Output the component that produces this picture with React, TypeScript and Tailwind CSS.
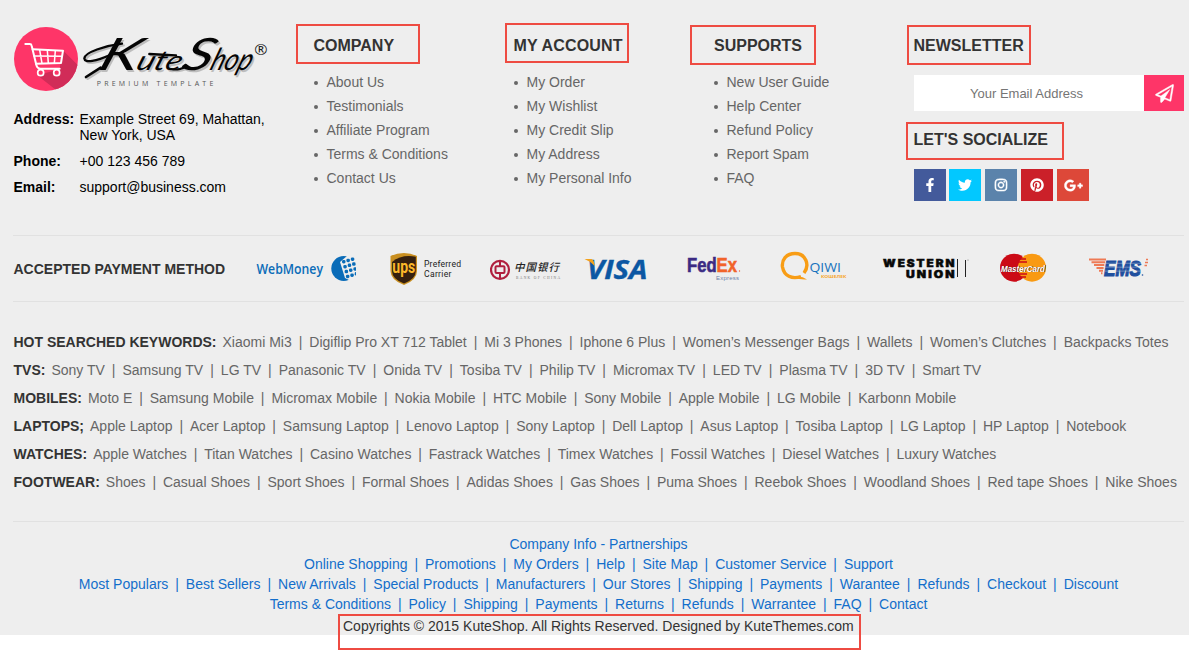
import type { ReactNode } from "react";
import {
  FaFacebookF,
  FaGooglePlusG,
  FaInstagram,
  FaPinterest,
  FaTwitter,
} from "react-icons/fa";

const company = ["About Us", "Testimonials", "Affiliate Program", "Terms & Conditions", "Contact Us"];
const account = ["My Order", "My Wishlist", "My Credit Slip", "My Address", "My Personal Info"];
const supports = ["New User Guide", "Help Center", "Refund Policy", "Report Spam", "FAQ"];

const keywords = [
  { label: "HOT SEARCHED KEYWORDS:", gap: "mx-[6.95px]", items: ["Xiaomi Mi3", "Digiflip Pro XT 712 Tablet", "Mi 3 Phones", "Iphone 6 Plus", "Women’s Messenger Bags", "Wallets", "Women’s Clutches", "Backpacks Totes"] },
  { label: "TVS:", gap: "mx-[7.02px]", items: ["Sony TV", "Samsung TV", "LG TV", "Panasonic TV", "Onida TV", "Tosiba TV", "Philip TV", "Micromax TV", "LED TV", "Plasma TV", "3D TV", "Smart TV"] },
  { label: "MOBILES:", items: ["Moto E", "Samsung Mobile", "Micromax Mobile", "Nokia Mobile", "HTC Mobile", "Sony Mobile", "Apple Mobile", "LG Mobile", "Karbonn Mobile"] },
  { label: "LAPTOPS;", items: ["Apple Laptop", "Acer Laptop", "Samsung Laptop", "Lenovo Laptop", "Sony Laptop", "Dell Laptop", "Asus Laptop", "Tosiba Laptop", "LG Laptop", "HP Laptop", "Notebook"] },
  { label: "WATCHES:", items: ["Apple Watches", "Titan Watches", "Casino Watches", "Fastrack Watches", "Timex Watches", "Fossil Watches", "Diesel Watches", "Luxury Watches"] },
  { label: "FOOTWEAR:", items: ["Shoes", "Casual Shoes", "Sport Shoes", "Formal Shoes", "Adidas Shoes", "Gas Shoes", "Puma Shoes", "Reebok Shoes", "Woodland Shoes", "Red tape Shoes", "Nike Shoes"] },
];

const bottomLinks = [
  ["Company Info - Partnerships"],
  ["Online Shopping", "Promotions", "My Orders", "Help", "Site Map", "Customer Service", "Support"],
  ["Most Populars", "Best Sellers", "New Arrivals", "Special Products", "Manufacturers", "Our Stores", "Shipping", "Payments", "Warantee", "Refunds", "Checkout", "Discount"],
  ["Terms & Conditions", "Policy", "Shipping", "Payments", "Returns", "Refunds", "Warrantee", "FAQ", "Contact"],
];

function Title({ className, children }: { className: string; children: ReactNode }) {
  return (
    <h3 className={`flex items-center border-2 border-[#ee4b42] text-base font-bold whitespace-nowrap text-[#333] ${className}`}>
      {children}
    </h3>
  );
}

function LinkList({ items, className }: { items: string[]; className: string }) {
  return (
    <ul className={className}>
      {items.map((t) => (
        <li key={t} className="flex h-6 items-center gap-[9px] whitespace-nowrap">
          <span className="mt-px size-1 rounded-full bg-[#666]" />
          <a>{t}</a>
        </li>
      ))}
    </ul>
  );
}

function Links({ items, gap = "mx-[6.89px]" }: { items: string[]; gap?: string }) {
  return (
    <>
      {items.map((t, i) => (
        <span key={t}>
          {i > 0 && <span className={gap}>|</span>}
          <a>{t}</a>
        </span>
      ))}
    </>
  );
}

function Logo() {
  return (
    <svg className="block h-[70px] w-[260px]" viewBox="36 30 780 210">
      <clipPath id="disc"><circle cx="138" cy="132" r="96" /></clipPath>
      <circle cx="138" cy="132" r="96" fill="#fe3568" />
      <path d="M190 107 L260 177 L200 250 L112 181 L178 163 Z" fill="#d12c58" clipPath="url(#disc)" />
      <g fill="none" stroke="#fff" strokeLinecap="round" strokeLinejoin="round">
        <path d="M76 87 H89 Q94 87 95 92 L109 150 Q112 161 122 161 H179" strokeWidth="6" />
        <path d="M98 103 L189 107 L183 144 L108 146" strokeWidth="6" />
        <path d="M102 123 L185 124 M119 105 L126 145 M142 106 L145 145 M166 107 L163 144" strokeWidth="4.5" />
        <circle cx="122" cy="173" r="9" strokeWidth="5" fill="#fe3568" />
        <circle cx="170" cy="173" r="9" strokeWidth="5" fill="#fe3568" />
      </g>
      {[{ c: "#bdbdbd", d: 5 }, { c: "#050505", d: 0 }].map(({ c, d }) => (
        <g key={c} transform={`translate(${d} ${d})`} aria-hidden={d > 0}>
          <g transform="translate(0 166) skewX(-20)" fill={c} fontFamily="Lato, sans-serif" fontStyle="italic">
            <text x="290" y="0" fontSize="134" textLength="116" lengthAdjust="spacingAndGlyphs">K</text>
            <text x="404" y="0" fontSize="82" textLength="134" lengthAdjust="spacingAndGlyphs">ute</text>
            <text x="540" y="0" fontSize="134" textLength="88" lengthAdjust="spacingAndGlyphs">S</text>
            <text x="626" y="0" fontSize="92" textLength="122" lengthAdjust="spacingAndGlyphs">hop</text>
          </g>
          <g fill="none" stroke={c} strokeLinecap="round">
            <path d="M366 86 C316 92 254 112 253 130 C254 146 290 138 330 120" strokeWidth="7" />
            <path d="M448 117 L528 121" strokeWidth="7" />
            <path d="M302 158 L258 186" strokeWidth="8" />
            <path d="M514 162 C532 168 548 160 562 154" strokeWidth="6" />
          </g>
        </g>
      ))}
      <text x="290" y="213" fontSize="21" fontFamily="Open Sans, sans-serif" fill="#555" textLength="350">PREMIUM TEMPLATE</text>
      <text x="763" y="120" fontSize="46" fontFamily="Open Sans, sans-serif" fill="#222" textLength="40" lengthAdjust="spacingAndGlyphs">®</text>
    </svg>
  );
}

function PaperPlane() {
  return (
    <svg className="size-[19px]" viewBox="-40 -40 1872 1872" fill="currentColor" stroke="currentColor" strokeWidth="50">
      <path d="M1764 11q33 24 27 64l-256 1536q-5 29-32 45-14 8-31 8-11 0-24-5l-527-215-298 327q-18 21-47 21-14 0-23-4-19-7-30-23.500t-11-36.500v-452l-472-193q-37-14-40-55-3-39 32-59l1664-960q35-21 68 2zM1422 1513l221-1323-1434 827 336 137 863-639-478 797z" />
    </svg>
  );
}

function WebMoney() {
  return (
    <svg className="ml-[31px] h-9 w-[100px] shrink-0" viewBox="256 251 100 36">
      <text x="256.5" y="273.5" fontSize="13.5" fontFamily="Open Sans, sans-serif" fontWeight="600" fill="#0a6cb8" textLength="66.5" lengthAdjust="spacingAndGlyphs">WebMoney</text>
      <circle cx="343.7" cy="268.5" r="12.4" fill="#0a6cb8" />
      <path d="M347 256 L357 256 V279 L351 281 L345 278 L340 262 Z" fill="#eee" />
      <g fill="#0a6cb8">
        {[0, 1, 2, 3].map((r) =>
          [0, 1, 2].map((c) => (
            <rect key={`${r}${c}`} x={342 + c * 4.4 + r * 1.3} y={260 + r * 4.9 - c * 1.3} width="3.5" height="3.5" rx="1.4" />
          )),
        )}
      </g>
    </svg>
  );
}

function Ups() {
  return (
    <svg className="ml-[34px] h-9 w-[72px] shrink-0" viewBox="390 251 72 36">
      <path d="M390.5 256 Q404 250 417 256 V271 Q417 280 404 285 Q390.5 280 390.5 271 Z" fill="#c98f20" />
      <path d="M392 262 Q402 254 415.8 256.8 V271 Q415.8 279 404 283.5 Q392 279 392 271 Z" fill="#35200f" />
      <text x="392.3" y="273" fontSize="17.5" fontWeight="bold" fontFamily="Roboto, sans-serif" fill="#fbb829" textLength="23" lengthAdjust="spacingAndGlyphs">ups</text>
      <g fontSize="8.6" fontFamily="Roboto, sans-serif" fill="#222">
        <text x="424" y="267" textLength="37">Preferred</text>
        <text x="424" y="277" textLength="27.5">Carrier</text>
      </g>
    </svg>
  );
}

function BankOfChina() {
  return (
    <svg className="ml-[28px] h-9 w-[72px] shrink-0" viewBox="490 251 72 36">
      <g fill="none" stroke="#b01f3e">
        <circle cx="500" cy="269.8" r="9" strokeWidth="2.2" />
        <rect x="495.5" y="266.3" width="9" height="6.8" rx="1" strokeWidth="2" />
        <path d="M500 261 V266 M500 273.5 V279" strokeWidth="2" />
      </g>
      <text x="514" y="270.5" fontSize="10.5" fontStyle="italic" fontWeight="500" fontFamily="Noto Sans CJK SC, sans-serif" fill="#222" textLength="45">中国银行</text>
      <text x="516" y="278.5" fontSize="3.6" fontFamily="Liberation Serif, serif" fill="#777" textLength="44">BANK OF CHINA</text>
    </svg>
  );
}

function Visa() {
  return (
    <svg className="ml-[22px] h-9 w-[66px] shrink-0" viewBox="584 251 66 36">
      <text x="587" y="278.5" fontSize="27" fontWeight="bold" fontStyle="italic" fontFamily="Open Sans, sans-serif" fill="#0b57a3" stroke="#0b57a3" strokeWidth=".4" textLength="60.5" lengthAdjust="spacingAndGlyphs">VISA</text>
      <path d="M584.5 259 H591.5 Q594 259.5 594.7 266 Q590 261 584.5 259 Z" fill="#f3a21c" />
    </svg>
  );
}

function FedEx() {
  return (
    <svg className="ml-[36px] h-9 w-[56px] shrink-0" viewBox="686 251 56 36">
      <text x="687" y="272.3" fontSize="21" fontWeight="bold" fontFamily="Liberation Sans, sans-serif" textLength="50" lengthAdjust="spacingAndGlyphs" strokeWidth=".6">
        <tspan fill="#3b2a83" stroke="#3b2a83">Fed</tspan>
        <tspan fill="#f1632a" stroke="#f1632a">Ex</tspan>
      </text>
      <text x="716" y="280" fontSize="6" fontFamily="Liberation Sans, sans-serif" fill="#6f7fa8" textLength="23">Express</text>
      <circle cx="739.5" cy="271" r=".7" fill="#f1632a" />
    </svg>
  );
}

function Qiwi() {
  return (
    <svg className="ml-[38px] h-9 w-[68px] shrink-0" viewBox="780 251 68 36">
      <path d="M804 273 C810 265 806 253.5 795 253.5 C786 253.5 781.5 260 782.5 267 C784 276 792 279.5 801 276.5" fill="none" stroke="#f89d15" strokeWidth="3.4" />
      <path d="M794 277 Q801 275 807 279.5 Q799 280 794 277" fill="#f89d15" />
      <text x="809.5" y="272" fontSize="12" fontFamily="Open Sans, sans-serif" fontWeight="500" fill="#1873bd" textLength="31.5" lengthAdjust="spacingAndGlyphs">QIWI</text>
      <text x="821" y="278" fontSize="4" fontWeight="bold" fontFamily="Open Sans, sans-serif" fill="#f6a52d" textLength="25.5" lengthAdjust="spacingAndGlyphs">КОШЕЛЕК</text>
    </svg>
  );
}

function WesternUnion() {
  return (
    <svg className="ml-[34px] h-9 w-[88px] shrink-0" viewBox="882 251 88 36">
      <g fontWeight="900" fontFamily="Inter, sans-serif" fontSize="10" fill="#080808" stroke="#080808" strokeWidth=".5">
        <text x="883" y="267" textLength="73.5" lengthAdjust="spacingAndGlyphs" letterSpacing="1.7">WESTERN</text>
        <text x="906" y="277.5" textLength="50.5" lengthAdjust="spacingAndGlyphs" letterSpacing="1.7">UNION</text>
      </g>
      <path d="M957.5 259 V277 M965.5 260 V277" stroke="#222" strokeWidth="1" />
      <circle cx="968" cy="260" r=".6" fill="#777" />
    </svg>
  );
}

function MasterCard() {
  return (
    <svg className="ml-[28px] h-9 w-[50px] shrink-0" viewBox="998 251 50 36">
      <circle cx="1014" cy="267.7" r="14" fill="#cb0a16" />
      <circle cx="1032" cy="267.7" r="14" fill="#f99a12" />
      <path d="M1019.5 259 H1026 M1018.5 262 H1027 M1018.5 274 H1027 M1019.5 277 H1026" stroke="#cb0a16" strokeWidth="1.4" />
      <text className="[text-shadow:0.8px_0.8px_0_#40201a]" x="1001" y="271.5" fontSize="9.5" fontWeight="bold" fontStyle="italic" fontFamily="Liberation Sans, sans-serif" fill="#fff" textLength="44" lengthAdjust="spacingAndGlyphs">MasterCard</text>
    </svg>
  );
}

function Ems() {
  return (
    <svg className="ml-[41px] h-9 w-[62px] shrink-0" viewBox="1089 251 62 36">
      <path d="M1089 259.5 H1106 M1091.5 262.3 H1105 M1094 265.1 H1104.3 M1096.5 267.9 H1103.6 M1099 270.7 H1103 M1101 273.2 H1102.5" stroke="#ee7a55" strokeWidth="2" />
      <text x="1104" y="275.8" fontSize="22.5" fontWeight="bold" fontStyle="italic" fontFamily="Liberation Sans, sans-serif" fill="#1f4f9e" stroke="#1f4f9e" strokeWidth="1.2" textLength="37" lengthAdjust="spacingAndGlyphs">EMS</text>
      <path d="M1105 263.3 H1143 M1105 267.2 H1143 M1105 271.1 H1143" stroke="#eee" strokeWidth=".5" opacity=".7" />
      <path d="M1146 259.5 H1148 M1145 262.5 H1148 M1144.5 265.5 H1147" stroke="#ee7a55" strokeWidth="1.6" />
      <circle cx="1142.5" cy="275" r=".8" fill="#1f4f9e" />
    </svg>
  );
}

const social = [
  { Icon: FaFacebookF, style: "bg-[#435a9b]", name: "Facebook", stroke: 0 },
  { Icon: FaTwitter, style: "-ml-px bg-[#02c8ff]", name: "Twitter", stroke: 0 },
  { Icon: FaInstagram, style: "bg-[#5b83ab]", name: "Instagram", stroke: 18 },
  { Icon: FaPinterest, style: "bg-[#cb2029]", name: "Pinterest", stroke: 0 },
  { Icon: FaGooglePlusG, style: "bg-[#dd4839]", name: "Google Plus", stroke: 12 },
];

export default function App() {
  return (
    <div className="h-[655px] overflow-hidden bg-white font-['Liberation_Sans',Arial,sans-serif] text-sm text-[#666]">
      <footer className="h-[635px] bg-[#eee]">
        <div className="flex h-[235px]">
          <section className="w-[296px] pt-[25px] pl-3 text-black">
            <Logo />
            <dl className="mt-[16px] grid grid-cols-[66px_1fr] gap-y-[10px] pl-[1.5px] leading-4">
              <dt className="font-bold">Address:</dt>
              <dd>Example Street 69, Mahattan,<br />New York, USA</dd>
              <dt className="font-bold">Phone:</dt>
              <dd>+00 123 456 789</dd>
              <dt className="font-bold">Email:</dt>
              <dd>support@business.com</dd>
            </dl>
          </section>
          <section className="w-[209px] pt-6">
            <Title className="h-10 w-[124px] pt-[3px] pl-[15.5px]">COMPANY</Title>
            <LinkList items={company} className="mt-[6px] pl-[17.5px]" />
          </section>
          <section className="w-[185px] pt-[23px]">
            <Title className="h-10 w-[124px] pt-[5px] pl-[6.5px] tracking-[0.15px]">MY ACCOUNT</Title>
            <LinkList items={account} className="mt-[7px] pl-[8.5px]" />
          </section>
          <section className="w-[216px] pt-[25px]">
            <Title className="h-10 w-[126px] pt-px pl-[22px]">SUPPORTS</Title>
            <LinkList items={supports} className="mt-[5px] pl-[23.5px]" />
          </section>
          <section className="w-[278px] pt-[25px]">
            <Title className="ml-px h-10 w-[124px] pt-px pl-[4.5px]">NEWSLETTER</Title>
            <form className="mt-[10px] ml-2 flex h-9">
              <input className="w-[230px] bg-white pt-0.5 pr-[13px] pl-2 text-center text-[13px] text-[#555] outline-none placeholder:text-[#757575] placeholder:opacity-100" placeholder="Your Email Address" />
              <button type="button" aria-label="Subscribe" className="flex w-10 items-center justify-center bg-[#fe3568] text-white">
                <PaperPlane />
              </button>
            </form>
            <Title className="mt-[11px] h-[38px] w-[158px] pb-[3px] pl-[5.5px]">LET'S SOCIALIZE</Title>
            <div className="mt-[9px] ml-2 flex gap-1">
              {social.map(({ Icon, style, name, stroke }) => (
                <a key={name} aria-label={name} className={`flex size-8 items-center justify-center text-white ${style}`}>
                  <Icon size={name === "Google Plus" ? 19 : 14} stroke="currentColor" strokeWidth={stroke} />
                </a>
              ))}
            </div>
          </section>
        </div>

        <div className="mr-[5px] ml-[13px] flex h-[67px] items-center border-y border-[#e1e1e1]">
          <h4 className="w-[212px] shrink-0 pl-[0.5px] font-bold whitespace-nowrap text-[#333]">ACCEPTED PAYMENT METHOD</h4>
          <WebMoney />
          <Ups />
          <BankOfChina />
          <Visa />
          <FedEx />
          <Qiwi />
          <WesternUnion />
          <MasterCard />
          <Ems />
        </div>

        <div className="mr-[5px] ml-[13px] h-[220px] border-b border-[#e1e1e1] pt-[26px]">
          {keywords.map((k) => (
            <div key={k.label} className="flex h-7 items-center pl-[0.5px] whitespace-nowrap">
              <b className="mr-[6px] text-[#333]">{k.label}</b>
              <Links items={k.items} gap={k.gap} />
            </div>
          ))}
        </div>

        <div className="mr-[5px] ml-[13px] flex flex-col items-center pt-3">
          {bottomLinks.map((row) => (
            <div key={row[0]} className="flex h-5 items-center whitespace-nowrap text-[#136ecb]">
              <Links items={row} gap="mx-[6.93px]" />
            </div>
          ))}
          <p className="ml-[2px] h-9 w-[523px] border-2 border-[#ee4b42] pl-[3px] leading-5 whitespace-nowrap text-[#333]">
            Copyrights © 2015 KuteShop. All Rights Reserved. Designed by KuteThemes.com
          </p>
        </div>
      </footer>
    </div>
  );
}
